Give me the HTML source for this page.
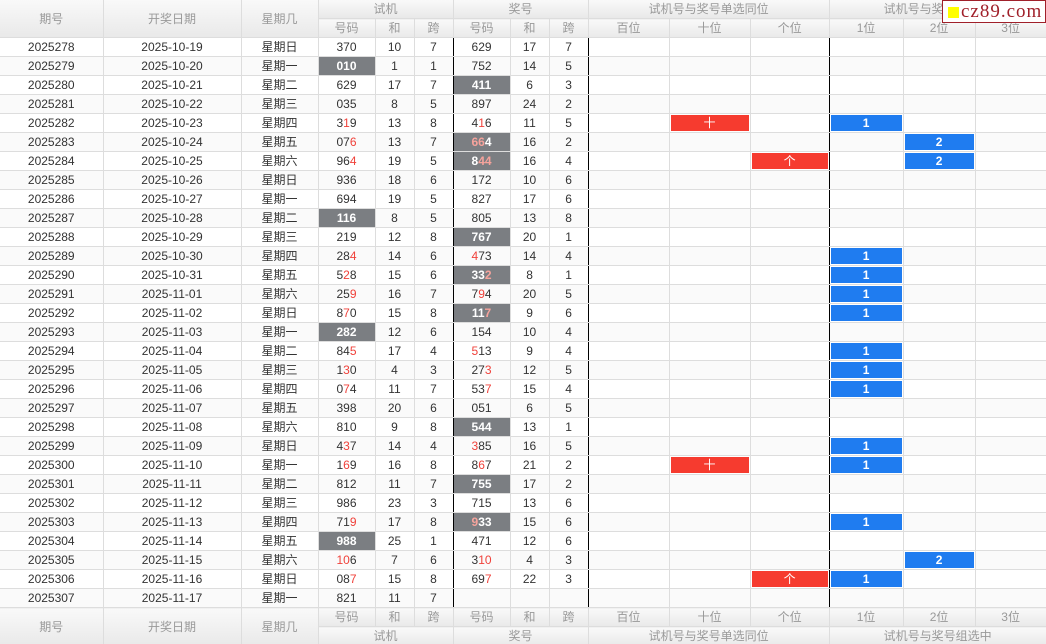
<!DOCTYPE html>
<html><head><meta charset="utf-8">
<style>
html,body{margin:0;padding:0;background:#fff;width:1046px;height:644px;overflow:hidden}
body{font-family:"Liberation Sans","Noto Sans CJK SC",sans-serif;font-size:12px;color:#333;position:relative}
table{border-collapse:collapse;table-layout:fixed;width:1046px}
td,th{border:1px solid #ddd;padding:0;height:18px;line-height:18px;text-align:center;white-space:nowrap;overflow:hidden}
th{font-weight:normal;color:#999;background:linear-gradient(#f9f9f9,#e9e9e9);font-size:12px}
thead tr:first-child th,tfoot tr:first-child th{border-top:0}
tr > :first-child{border-left:0}
tbody tr:nth-child(odd){background:#fff}
tbody tr:nth-child(even){background:#fafafa}
tbody td:nth-child(6),tbody td:nth-child(9),tbody td:nth-child(12){border-right:1px solid #000}
i{font-style:normal;color:#f0413a}
.g{background:#7b7e82!important;color:#fff;font-weight:bold}
.g i{color:#f6a39c}
.r{background:#f63b2f;color:#fff;box-shadow:inset 0 0 0 1px #fff}
.b{background:#1f7cf0;color:#fff;font-weight:bold;box-shadow:inset 0 0 0 1px #fff}
.logo{position:absolute;left:942px;top:0;width:102px;height:21px;background:#fff;border:1px solid #a0202a;font-family:"Liberation Serif",serif;font-size:19px;color:#a0202a;line-height:21px;letter-spacing:1px}
.logo span{display:inline-block;width:11px;height:11px;background:#ffff00;margin:0 2px 0 5px;vertical-align:-1px}
</style></head><body>
<table>
<colgroup><col style="width:103px"><col style="width:138px"><col style="width:77px"><col style="width:57px"><col style="width:39px"><col style="width:39px"><col style="width:57px"><col style="width:39px"><col style="width:39px"><col style="width:81px"><col style="width:81px"><col style="width:79px"><col style="width:74px"><col style="width:72px"><col style="width:71px"></colgroup>
<thead>
<tr><th rowspan="2">期号</th><th rowspan="2">开奖日期</th><th rowspan="2">星期几</th><th colspan="3">试机</th><th colspan="3">奖号</th><th colspan="3">试机号与奖号单选同位</th><th colspan="3">试机号与奖号组选中</th></tr>
<tr><th>号码</th><th>和</th><th>跨</th><th>号码</th><th>和</th><th>跨</th><th>百位</th><th>十位</th><th>个位</th><th>1位</th><th>2位</th><th>3位</th></tr>
</thead>
<tbody>
<tr><td>2025278</td><td>2025-10-19</td><td>星期日</td><td>370</td><td>10</td><td>7</td><td>629</td><td>17</td><td>7</td><td></td><td></td><td></td><td></td><td></td><td></td></tr>
<tr><td>2025279</td><td>2025-10-20</td><td>星期一</td><td class="g">010</td><td>1</td><td>1</td><td>752</td><td>14</td><td>5</td><td></td><td></td><td></td><td></td><td></td><td></td></tr>
<tr><td>2025280</td><td>2025-10-21</td><td>星期二</td><td>629</td><td>17</td><td>7</td><td class="g">411</td><td>6</td><td>3</td><td></td><td></td><td></td><td></td><td></td><td></td></tr>
<tr><td>2025281</td><td>2025-10-22</td><td>星期三</td><td>035</td><td>8</td><td>5</td><td>897</td><td>24</td><td>2</td><td></td><td></td><td></td><td></td><td></td><td></td></tr>
<tr><td>2025282</td><td>2025-10-23</td><td>星期四</td><td>3<i>1</i>9</td><td>13</td><td>8</td><td>4<i>1</i>6</td><td>11</td><td>5</td><td></td><td class="r">十</td><td></td><td class="b">1</td><td></td><td></td></tr>
<tr><td>2025283</td><td>2025-10-24</td><td>星期五</td><td>07<i>6</i></td><td>13</td><td>7</td><td class="g"><i>66</i>4</td><td>16</td><td>2</td><td></td><td></td><td></td><td></td><td class="b">2</td><td></td></tr>
<tr><td>2025284</td><td>2025-10-25</td><td>星期六</td><td>96<i>4</i></td><td>19</td><td>5</td><td class="g">8<i>44</i></td><td>16</td><td>4</td><td></td><td></td><td class="r">个</td><td></td><td class="b">2</td><td></td></tr>
<tr><td>2025285</td><td>2025-10-26</td><td>星期日</td><td>936</td><td>18</td><td>6</td><td>172</td><td>10</td><td>6</td><td></td><td></td><td></td><td></td><td></td><td></td></tr>
<tr><td>2025286</td><td>2025-10-27</td><td>星期一</td><td>694</td><td>19</td><td>5</td><td>827</td><td>17</td><td>6</td><td></td><td></td><td></td><td></td><td></td><td></td></tr>
<tr><td>2025287</td><td>2025-10-28</td><td>星期二</td><td class="g">116</td><td>8</td><td>5</td><td>805</td><td>13</td><td>8</td><td></td><td></td><td></td><td></td><td></td><td></td></tr>
<tr><td>2025288</td><td>2025-10-29</td><td>星期三</td><td>219</td><td>12</td><td>8</td><td class="g">767</td><td>20</td><td>1</td><td></td><td></td><td></td><td></td><td></td><td></td></tr>
<tr><td>2025289</td><td>2025-10-30</td><td>星期四</td><td>28<i>4</i></td><td>14</td><td>6</td><td><i>4</i>73</td><td>14</td><td>4</td><td></td><td></td><td></td><td class="b">1</td><td></td><td></td></tr>
<tr><td>2025290</td><td>2025-10-31</td><td>星期五</td><td>5<i>2</i>8</td><td>15</td><td>6</td><td class="g">33<i>2</i></td><td>8</td><td>1</td><td></td><td></td><td></td><td class="b">1</td><td></td><td></td></tr>
<tr><td>2025291</td><td>2025-11-01</td><td>星期六</td><td>25<i>9</i></td><td>16</td><td>7</td><td>7<i>9</i>4</td><td>20</td><td>5</td><td></td><td></td><td></td><td class="b">1</td><td></td><td></td></tr>
<tr><td>2025292</td><td>2025-11-02</td><td>星期日</td><td>8<i>7</i>0</td><td>15</td><td>8</td><td class="g">11<i>7</i></td><td>9</td><td>6</td><td></td><td></td><td></td><td class="b">1</td><td></td><td></td></tr>
<tr><td>2025293</td><td>2025-11-03</td><td>星期一</td><td class="g">282</td><td>12</td><td>6</td><td>154</td><td>10</td><td>4</td><td></td><td></td><td></td><td></td><td></td><td></td></tr>
<tr><td>2025294</td><td>2025-11-04</td><td>星期二</td><td>84<i>5</i></td><td>17</td><td>4</td><td><i>5</i>13</td><td>9</td><td>4</td><td></td><td></td><td></td><td class="b">1</td><td></td><td></td></tr>
<tr><td>2025295</td><td>2025-11-05</td><td>星期三</td><td>1<i>3</i>0</td><td>4</td><td>3</td><td>27<i>3</i></td><td>12</td><td>5</td><td></td><td></td><td></td><td class="b">1</td><td></td><td></td></tr>
<tr><td>2025296</td><td>2025-11-06</td><td>星期四</td><td>0<i>7</i>4</td><td>11</td><td>7</td><td>53<i>7</i></td><td>15</td><td>4</td><td></td><td></td><td></td><td class="b">1</td><td></td><td></td></tr>
<tr><td>2025297</td><td>2025-11-07</td><td>星期五</td><td>398</td><td>20</td><td>6</td><td>051</td><td>6</td><td>5</td><td></td><td></td><td></td><td></td><td></td><td></td></tr>
<tr><td>2025298</td><td>2025-11-08</td><td>星期六</td><td>810</td><td>9</td><td>8</td><td class="g">544</td><td>13</td><td>1</td><td></td><td></td><td></td><td></td><td></td><td></td></tr>
<tr><td>2025299</td><td>2025-11-09</td><td>星期日</td><td>4<i>3</i>7</td><td>14</td><td>4</td><td><i>3</i>85</td><td>16</td><td>5</td><td></td><td></td><td></td><td class="b">1</td><td></td><td></td></tr>
<tr><td>2025300</td><td>2025-11-10</td><td>星期一</td><td>1<i>6</i>9</td><td>16</td><td>8</td><td>8<i>6</i>7</td><td>21</td><td>2</td><td></td><td class="r">十</td><td></td><td class="b">1</td><td></td><td></td></tr>
<tr><td>2025301</td><td>2025-11-11</td><td>星期二</td><td>812</td><td>11</td><td>7</td><td class="g">755</td><td>17</td><td>2</td><td></td><td></td><td></td><td></td><td></td><td></td></tr>
<tr><td>2025302</td><td>2025-11-12</td><td>星期三</td><td>986</td><td>23</td><td>3</td><td>715</td><td>13</td><td>6</td><td></td><td></td><td></td><td></td><td></td><td></td></tr>
<tr><td>2025303</td><td>2025-11-13</td><td>星期四</td><td>71<i>9</i></td><td>17</td><td>8</td><td class="g"><i>9</i>33</td><td>15</td><td>6</td><td></td><td></td><td></td><td class="b">1</td><td></td><td></td></tr>
<tr><td>2025304</td><td>2025-11-14</td><td>星期五</td><td class="g">988</td><td>25</td><td>1</td><td>471</td><td>12</td><td>6</td><td></td><td></td><td></td><td></td><td></td><td></td></tr>
<tr><td>2025305</td><td>2025-11-15</td><td>星期六</td><td><i>10</i>6</td><td>7</td><td>6</td><td>3<i>10</i></td><td>4</td><td>3</td><td></td><td></td><td></td><td></td><td class="b">2</td><td></td></tr>
<tr><td>2025306</td><td>2025-11-16</td><td>星期日</td><td>08<i>7</i></td><td>15</td><td>8</td><td>69<i>7</i></td><td>22</td><td>3</td><td></td><td></td><td class="r">个</td><td class="b">1</td><td></td><td></td></tr>
<tr><td>2025307</td><td>2025-11-17</td><td>星期一</td><td>821</td><td>11</td><td>7</td><td></td><td></td><td></td><td></td><td></td><td></td><td></td><td></td><td></td></tr>
</tbody>
<tfoot>
<tr><th rowspan="2">期号</th><th rowspan="2">开奖日期</th><th rowspan="2">星期几</th><th>号码</th><th>和</th><th>跨</th><th>号码</th><th>和</th><th>跨</th><th>百位</th><th>十位</th><th>个位</th><th>1位</th><th>2位</th><th>3位</th></tr>
<tr><th colspan="3" style="border-left:1px solid #ddd">试机</th><th colspan="3">奖号</th><th colspan="3">试机号与奖号单选同位</th><th colspan="3">试机号与奖号组选中</th></tr>
</tfoot>
</table>
<div class="logo"><span></span>cz89.com</div>
</body></html>
